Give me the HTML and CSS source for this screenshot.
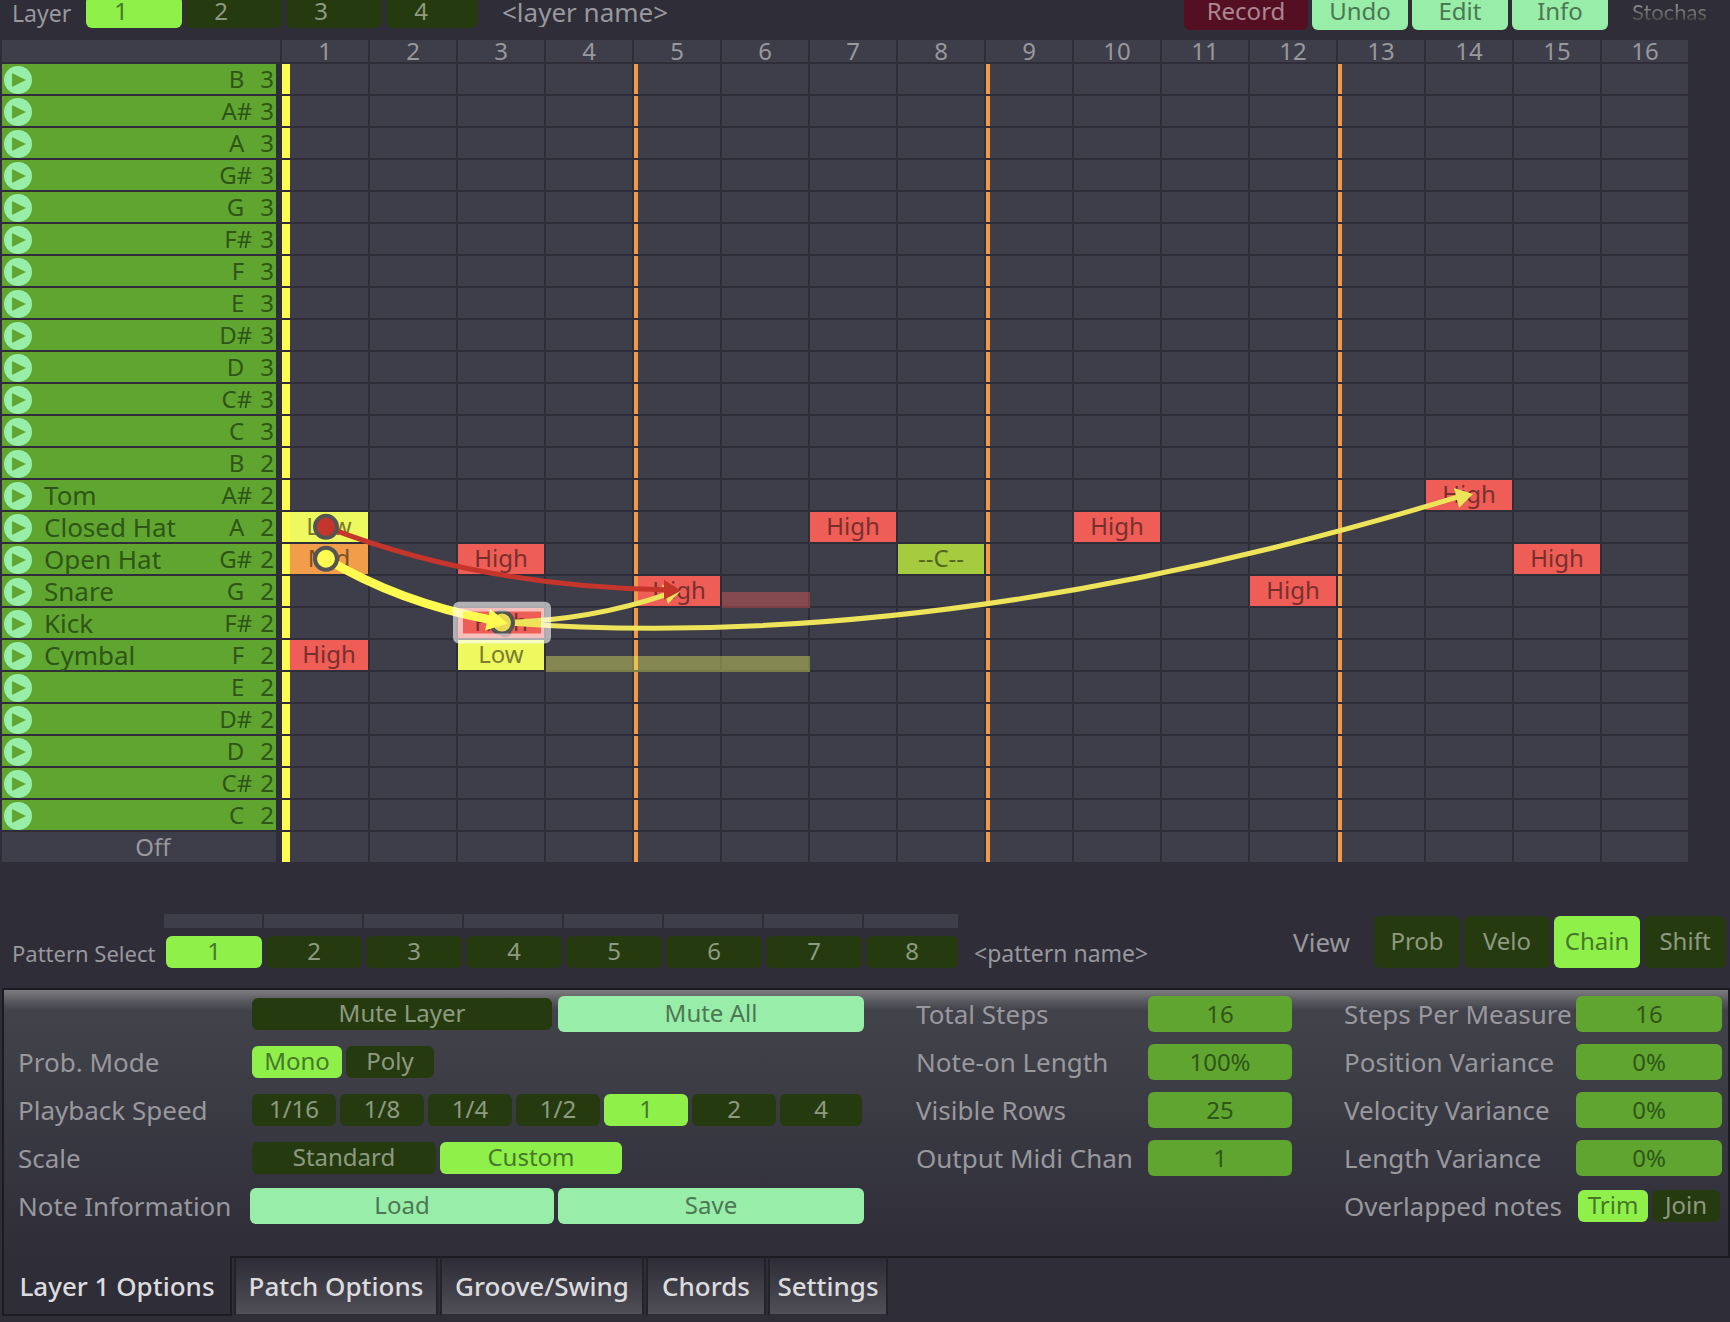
FILE: index.html
```html
<!DOCTYPE html>
<html lang="en">
<head>
<meta charset="utf-8">
<title>Stochas</title>
<link rel="stylesheet" href="styles.css">
</head>
<body>
<header class="toolbar">
  <span class="caption toolbar-caption">Layer</span>
  <div class="layers">
    <button class="btn on">1</button>
    <button class="btn off">2</button>
    <button class="btn off">3</button>
    <button class="btn off">4</button>
  </div>
  <input class="name" aria-label="Layer name" value="&lt;layer name&gt;">
  <div class="actions">
    <button class="btn record">Record</button>
    <button class="btn mint">Undo</button>
    <button class="btn mint">Edit</button>
    <button class="btn mint">Info</button>
  </div>
  <span class="brand">Stochas</span>
</header>

<main>
  <section class="sequencer" aria-label="Step grid">
    <div class="row head" id="head"></div>
    <div class="rows">
      <div id="rows"></div>
      <svg class="chains" viewBox="0 0 1406 798" preserveAspectRatio="none" aria-hidden="true">
        <g fill="none" stroke="#ede45a" stroke-width="5">
          <path d="M220 560Q308 558 384 532"/>
          <path d="M220 560Q655 593 1176 434"/>
        </g>
        <g fill="#ede45a">
          <path d="M380 522L399 528L386 541Z"/>
          <path d="M1172 425L1191 431L1177 445Z"/>
        </g>
        <circle cx="220" cy="560" r="11" fill="#e8da55" stroke="#545454" stroke-width="4"/>
        <path d="M44 496Q118 540 208 557" fill="none" stroke="#fffb50" stroke-width="9"/>
        <path d="M208 546L226 561L203 568Z" fill="#fffb50"/>
        <path d="M44 464Q198 524 384 527" fill="none" stroke="#c6352b" stroke-width="5"/>
        <path d="M382 517L399 528L382 537Z" fill="#c6352b"/>
        <circle cx="44" cy="464" r="11" fill="#c6352b" stroke="#545454" stroke-width="4"/>
        <circle cx="44" cy="496" r="11" fill="#fffb50" stroke="#545454" stroke-width="4"/>
        <rect x="176" y="544" width="88" height="32" rx="1" fill="none" stroke="#fff" stroke-opacity=".6" stroke-width="10" stroke-linejoin="round"/>
      </svg>
    </div>
  </section>

  <section class="patterns">
    <span class="caption pattern-caption">Pattern Select</span>
    <div class="pattern-picker">
      <div class="strip"><i></i><i></i><i></i><i></i><i></i><i></i><i></i><i></i></div>
      <div class="pattern-buttons">
        <button class="btn on">1</button>
        <button class="btn off">2</button>
        <button class="btn off">3</button>
        <button class="btn off">4</button>
        <button class="btn off">5</button>
        <button class="btn off">6</button>
        <button class="btn off">7</button>
        <button class="btn off">8</button>
      </div>
    </div>
    <input class="name pattern-name" aria-label="Pattern name" value="&lt;pattern name&gt;">
    <div class="views">
      <span class="view-caption">View</span>
      <button class="btn off">Prob</button>
      <button class="btn off">Velo</button>
      <button class="btn on">Chain</button>
      <button class="btn off">Shift</button>
    </div>
  </section>

  <section class="panel">
    <div class="group group-main">
      <div class="field"><span></span>
        <div class="pair"><button class="btn off inset">Mute Layer</button><button class="btn mint">Mute All</button></div></div>
      <div class="field"><span>Prob. Mode</span>
        <div class="seg seg-mode"><button class="btn on">Mono</button><button class="btn off">Poly</button></div></div>
      <div class="field"><span>Playback Speed</span>
        <div class="seg seg-speed"><button class="btn off">1/16</button><button class="btn off">1/8</button><button class="btn off">1/4</button><button class="btn off">1/2</button><button class="btn on">1</button><button class="btn off">2</button><button class="btn off">4</button></div></div>
      <div class="field"><span>Scale</span>
        <div class="seg seg-scale"><button class="btn off">Standard</button><button class="btn on">Custom</button></div></div>
      <div class="field"><span>Note Information</span>
        <div class="pair"><button class="btn mint">Load</button><button class="btn mint">Save</button></div></div>
    </div>
    <div class="group group-steps">
      <div class="field"><label for="total">Total Steps</label><input class="value" id="total" value="16"></div>
      <div class="field"><label for="noteon">Note-on Length</label><input class="value" id="noteon" value="100%"></div>
      <div class="field"><label for="visible">Visible Rows</label><input class="value" id="visible" value="25"></div>
      <div class="field"><label for="chan">Output Midi Chan</label><input class="value" id="chan" value="1"></div>
    </div>
    <div class="group group-variance">
      <div class="field"><label for="measure">Steps Per Measure</label><input class="value" id="measure" value="16"></div>
      <div class="field"><label for="position">Position Variance</label><input class="value" id="position" value="0%"></div>
      <div class="field"><label for="velocity">Velocity Variance</label><input class="value" id="velocity" value="0%"></div>
      <div class="field"><label for="length">Length Variance</label><input class="value" id="length" value="0%"></div>
      <div class="field"><span>Overlapped notes</span>
        <div class="seg seg-overlap"><button class="btn on">Trim</button><button class="btn off">Join</button></div></div>
    </div>
  </section>

  <nav class="tabs">
    <button class="tab current">Layer 1 Options</button>
    <button class="tab wide">Patch Options</button>
    <button class="tab wide">Groove/Swing</button>
    <button class="tab">Chords</button>
    <button class="tab">Settings</button>
  </nav>
</main>
<script src="grid.js"></script>
</body>
</html>
```
FILE: grid.js
```js
const STEPS = 16;
const SCALE = ["B", "A#", "A", "G#", "G", "F#", "F", "E", "D#", "D", "C#", "C"];
const NAMES = { "A#2": "Tom", "A2": "Closed Hat", "G#2": "Open Hat", "G2": "Snare", "F#2": "Kick", "F2": "Cymbal" };
// row key -> step number -> [label, style, tail length in steps]
const NOTES = {
  "A#2": { 14: ["High", "high"] },
  "A2": { 1: ["Low", "low"], 7: ["High", "high"], 10: ["High", "high"] },
  "G#2": { 1: ["Mid", "mid"], 3: ["High", "high"], 8: ["--C--", "chance"], 15: ["High", "high"] },
  "G2": { 5: ["High", "high", 1], 12: ["High", "high"] },
  "F#2": { 3: ["High", "high"] },
  "F2": { 1: ["High", "high"], 3: ["Low", "low", 3] }
};
const PLAY = '<svg class="play" viewBox="0 0 28 28" aria-hidden="true"><circle cx="14" cy="14" r="14" fill="#98eea8"/><path d="M8 7L22 14L8 21Z" fill="#61a531"/></svg>';

function steps(notes) {
  let html = "";
  for (let s = 1; s <= STEPS; s++) {
    const n = notes[s];
    const beat = s === 1 ? " start" : s % 4 === 1 ? " beat" : "";
    // a step on a beat has a 4px marker that is not part of its 100%
    const extra = beat ? 6 : 2;
    const tail = n && n[2] ? '<i class="tail" style="width:calc(' + n[2] + " * (100% + " + extra + 'px))"></i>' : "";
    html += '<div class="step' + beat + (n ? " " + n[1] : "") + '">' + (n ? n[0] : "") + tail + "</div>";
  }
  return html;
}

let head = '<div class="corner"></div>';
for (let s = 1; s <= STEPS; s++) head += '<div class="num">' + s + "</div>";
document.getElementById("head").innerHTML = head;

let rows = "";
for (const octave of [3, 2]) {
  for (const note of SCALE) {
    const key = note + octave;
    rows += '<div class="row"><button class="key">' + PLAY +
      '<span class="key-name">' + (NAMES[key] || "") + '</span><span class="pitch' +
      (note.length > 1 ? " sharp" : "") + '">' + note + "</span><span>" + octave + "</span></button>" +
      steps(NOTES[key] || {}) + "</div>";
  }
}
rows += '<div class="row"><div class="key none">Off</div>' + steps({}) + "</div>";
document.getElementById("rows").innerHTML = rows;
```
FILE: styles.css
```css
* { box-sizing: border-box; }

body {
  margin: 0;
  background: #2e2d38;
  color: #98989d;
  font-family: "Noto Sans", "Open Sans", sans-serif;
  font-size: 26px;
  line-height: 30px;
  overflow-x: hidden;
}

button, input {
  margin: 0;
  padding: 0;
  border: 0;
  font: inherit;
  color: inherit;
  background: none;
}

.btn {
  height: 32px;
  padding-bottom: 2px;
  border-radius: 6px;
  font-size: 24px;
  line-height: 28px;
  text-align: center;
  white-space: nowrap;
}
.on { background: #8ff04a; color: #47782a; }
.off { background: #253b0f; color: #8e9a80; }
.mint { background: #98eea8; color: #4c7754; height: 36px; }
.record { background: #550f22; color: #aa8791; height: 36px; }

.caption { font-size: 23px; white-space: nowrap; }

/* toolbar, partly scrolled under the top edge */
.toolbar {
  display: flex;
  align-items: flex-start;
  height: 46px;
  margin-top: -6px;
  padding: 0 20px 0 12px;
}
.toolbar-caption { width: 74px; padding-top: 4px; }
.layers { display: flex; gap: 4px; padding-top: 2px; }
.layers .btn { width: 96px; padding-right: 26px; }
.layers .btn:last-child { width: 92px; padding-right: 22px; }
.name { width: 190px; height: 30px; margin: 3px 0 0 24px; }
.actions { display: flex; gap: 4px; margin-left: auto; }
.actions .btn { width: 96px; }
.actions .record { width: 124px; }
.brand {
  width: 78px;
  margin: 3px 0 0 24px;
  font-family: Lato, sans-serif;
  font-size: 22px;
  background: linear-gradient(#98989a 20%, #4c4a45 80%);
  -webkit-background-clip: text;
  background-clip: text;
  color: transparent;
}

/* step grid */
.sequencer { padding: 0 42px 0 2px; font-size: 24px; }
.row {
  display: grid;
  grid-template-columns: 278px repeat(16, minmax(0, 1fr));
  gap: 2px;
  height: 30px;
  margin-bottom: 2px;
}
.head { height: 22px; line-height: 22px; text-align: center; }
.corner, .num, .step, .none { background: #3e3d4a; }
.rows { position: relative; line-height: 28px; }
.key {
  display: flex;
  align-items: center;
  width: 274px;
  height: 30px;
  padding: 0 2px;
  background: #61a531;
  color: #2e5616;
  text-align: left;
}
.none { padding-left: 30px; justify-content: center; background: #3e3d4a; color: #98989d; }
.play { width: 28px; height: 28px; align-self: flex-end; flex: none; }
.key-name { flex: 1; padding-left: 12px; font-size: 26px; }
.pitch { padding-right: 16px; }
.sharp { padding-right: 8px; }
.step { position: relative; text-align: center; white-space: nowrap; }
.start { border-left: 8px solid #fffd52; }
.beat { border-left: 4px solid #f29a49; }
.high { background-color: #ee5e57; color: #792f2c; }
.low { background-color: #eef85f; color: #7b7e31; }
.mid { background-color: #f29d4a; color: #7b5127; }
.chance { background-color: #a5cb3f; color: #53671f; }
.tail {
  position: absolute;
  z-index: 1;
  left: calc(100% + 2px);
  top: 16px;
  height: 16px;
  background: #eef85f;
  opacity: .4;
}
.high .tail { background: #ee5e57; }
.chains {
  position: absolute;
  z-index: 2;
  top: 0;
  left: 280px;
  width: calc(100% - 280px);
  height: calc(100% - 2px);
  pointer-events: none;
}

/* pattern row */
.patterns {
  display: flex;
  align-items: flex-end;
  padding: 50px 4px 20px 12px;
}
.pattern-caption { width: 152px; font-size: 22px; }
.strip { display: flex; gap: 2px; margin-bottom: 8px; }
.strip i { width: 98px; height: 14px; background: #3e3d4a; }
.strip i:last-child { width: 94px; }
.pattern-buttons { display: flex; gap: 4px; padding-left: 2px; }
.pattern-buttons .btn { width: 96px; }
.pattern-buttons .btn:last-child { width: 92px; }
.pattern-name { margin: 0 0 0 16px; font-size: 23px; }
.views { display: flex; align-items: center; gap: 4px; margin-left: auto; }
.view-caption { margin-right: 20px; }
.views .btn { width: 86px; height: 52px; }
.views .btn:last-child { width: 82px; }

/* options panel */
.panel {
  display: grid;
  grid-template-columns: minmax(0, 860fr) minmax(0, 376fr) minmax(0, 378fr);
  column-gap: 52px;
  margin-left: 2px;
  padding: 0 6px 26px 0;
  border: 2px solid #1c1b22;
  background: linear-gradient(#7d7d81 0, #5c5c62 10px, #42424b 20px, #3e3e47 80px, #2e2d38 100%);
}
.field { display: flex; align-items: center; justify-content: space-between; height: 48px; white-space: nowrap; }
.group-main .field { display: grid; grid-template-columns: 232px minmax(0, 1fr); padding-left: 14px; }
.pair { display: grid; grid-template-columns: 304fr 306fr; gap: 4px; align-items: center; }
.inset { margin: 0 2px; }
.seg { display: flex; gap: 4px; padding: 0 2px; }
.seg-mode .btn { width: 90px; }
.seg-mode .off { width: 88px; }
.seg-speed .btn { flex: 84; }
.seg-speed .btn:last-child { flex: 82; }
.seg-scale .btn { width: 182px; }
.seg-scale .off { width: 184px; }
.seg-overlap .btn { width: 70px; }
.seg-overlap .off { width: 68px; }
.value {
  width: 144px;
  height: 36px;
  padding-bottom: 2px;
  border-radius: 6px;
  background: #61a531;
  color: #2e5616;
  font-size: 24px;
  text-align: center;
}
.group-variance .value { width: 146px; }

/* tabs */
.tabs { display: flex; gap: 2px; margin: -2px 0 6px 2px; }
.tab {
  min-width: 120px;
  height: 60px;
  border: 2px solid #23222a;
  border-top-color: #1c1b22;
  border-bottom-color: #2e2d38;
  background: linear-gradient(#2d2c36, #504f58);
  color: #dcdcde;
  font-weight: 500;
  white-space: nowrap;
}
.wide { min-width: 204px; }
.current {
  position: relative;
  min-width: 230px;
  padding-top: 2px;
  border: solid #1c1b22;
  border-width: 0 2px 2px;
  background: #2e2d38;
}
```
